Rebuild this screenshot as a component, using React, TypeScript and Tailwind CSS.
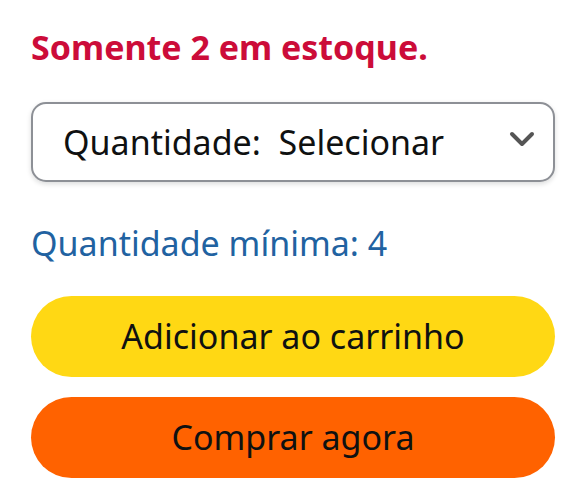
export default function App() {
  return (
    <div className="min-h-[500px] bg-white pl-[31px] pr-[22px] pt-[27px] font-['Noto_Sans',sans-serif] text-[34px] text-[#0f1111]">
      {/* stock */}
      <p className="font-bold leading-[40px] text-[#cc0c39]">Somente 2 em estoque.</p>

      {/* quantity select */}
      <div className="mt-[35px] flex h-[80px] items-center justify-between rounded-[15px] border-2 border-[#8d9096] bg-white pl-[30px] pr-[18px] shadow-[0_2px_5px_rgba(15,17,17,0.15)]">
        <span className="leading-none">Quantidade:&nbsp; Selecionar</span>
        <svg width="26" height="17" viewBox="0 0 26 17" className="mb-[5px]">
          <path
            d="M3 3 L13 13 L23 3"
            fill="none"
            stroke="#555"
            strokeWidth="4"
            strokeLinecap="round"
            strokeLinejoin="round"
          />
        </svg>
      </div>

      <p className="mt-[41px] leading-[40px] text-[#2162a1]">Quantidade mínima: 4</p>

      {/* buttons */}
      <div className="mt-[33px] flex flex-col gap-[20px]">
        <button className="h-[81px] w-full rounded-full bg-[#ffd814]">
          Adicionar ao carrinho
        </button>
        <button className="h-[81px] w-full rounded-full bg-[#ff6200]">
          Comprar agora
        </button>
      </div>
    </div>
  );
}
